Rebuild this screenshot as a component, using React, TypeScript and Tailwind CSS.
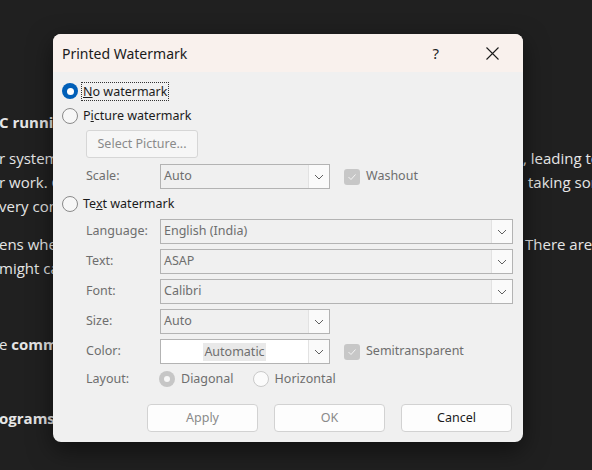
import React from 'react'

const UI = { fontFamily: '"Noto Sans", "Open Sans", sans-serif' }
const DOC = { fontFamily: '"Open Sans", "Noto Sans", sans-serif' }

function Chevron() {
  return (
    <svg width="10" height="6" viewBox="0 0 10 6" fill="none">
      <polyline points="1,1 5,5 9,1" stroke="#606060" strokeWidth="1" />
    </svg>
  )
}

function Radio({ state }: { state: 'on' | 'off' | 'dis-on' | 'dis-off' }) {
  if (state === 'on')
    return (
      <span className="w-[16px] h-[16px] rounded-full bg-[#005fb8] flex items-center justify-center shrink-0">
        <span className="w-[7px] h-[7px] rounded-full bg-white" />
      </span>
    )
  if (state === 'dis-on')
    return (
      <span className="w-[16px] h-[16px] rounded-full bg-[#c6c6c6] flex items-center justify-center shrink-0">
        <span className="w-[6px] h-[6px] rounded-full bg-[#f7f7f7]" />
      </span>
    )
  if (state === 'dis-off')
    return <span className="w-[16px] h-[16px] rounded-full border border-[#c9c9c9] bg-[#fbfbfb] shrink-0" />
  return <span className="w-[16px] h-[16px] rounded-full border border-[#8a8a8a] bg-[#f7f7f7] shrink-0" />
}

function Check() {
  return (
    <span className="w-[16px] h-[16px] rounded-[3px] bg-[#c7c7c7] flex items-center justify-center shrink-0">
      <svg width="10" height="8" viewBox="0 0 10 8" fill="none">
        <polyline points="1.5,4 4,6.5 8.5,1.5" stroke="#f4f4f4" strokeWidth="1" />
      </svg>
    </span>
  )
}

function Select({ value, wide, white, center }: { value: string; wide?: boolean; white?: boolean; center?: boolean }) {
  return (
    <div
      className={`${wide ? 'w-[353px]' : 'w-[170px]'} h-[25px] flex border border-[#b3b3b3] ${white ? 'bg-white' : 'bg-[#f0f0f0]'}`}
    >
      <div className={`flex-1 flex items-center px-[3px] text-[#6e6e6e] ${center ? 'justify-center' : ''}`}>
        <span className={center ? 'bg-[#e9e9e9] px-[1px] leading-[18px]' : ''}>{value}</span>
      </div>
      <div className="w-[21px] bg-[#fafafa] border-l border-[#e2e2e2] flex items-center justify-center">
        <Chevron />
      </div>
    </div>
  )
}

function FieldRow({ label, children }: { label: string; children: React.ReactNode }) {
  return (
    <div className="flex items-center h-[25px]">
      <span className="w-[74px] text-[#6e6e6e]">{label}</span>
      {children}
    </div>
  )
}

function Btn({ label, active }: { label: string; active?: boolean }) {
  return (
    <div
      className={`w-[111px] h-[28px] rounded-[4px] border border-[#d2d2d2] bg-[#fdfdfd] flex items-center justify-center ${active ? 'text-[#1b1b1b]' : 'text-[#8a8a8a]'}`}
    >
      {label}
    </div>
  )
}

// lines of the document that sits behind the dialog
const docLines: { top: number; left: React.ReactNode; right?: string; pad?: string }[] = [
  { top: 110, left: <b>C running slow</b> },
  { top: 12, left: 'r system resources are used up', right: ', leading to', pad: 'pl-[1px]' },
  { top: 0, left: 'r work. Closing programs', right: 'taking some', pad: 'pl-[6px]' },
  { top: 0, left: 'very computer' },
  { top: 14, left: 'ens when too many apps', right: 'There are', pad: 'pl-[3px]' },
  { top: 0, left: 'might cause' },
  { top: 52, left: <>e <b>commands</b></> },
  { top: 50, left: <b>ograms</b> },
]

export default function App() {
  return (
    <div className="relative w-[592px] h-[470px] bg-[#202020] overflow-hidden">
      <div className="flex flex-col text-[15px] text-[#e6e6e6]" style={DOC}>
        {docLines.map((l, i) => (
          <div key={i} className="grid grid-cols-[522px_70px] leading-[24px]" style={{ marginTop: l.top }}>
            <div className="whitespace-nowrap overflow-hidden ml-[-1px]">{l.left}</div>
            <div className={`whitespace-nowrap overflow-hidden ${l.pad ?? ''}`}>{l.right}</div>
          </div>
        ))}
      </div>

      {/* dialog */}
      <div
        className="absolute left-[53px] top-[34px] w-[470px] h-[408px] rounded-[8px] overflow-hidden bg-[#f0f0f0] shadow-[0_8px_24px_rgba(0,0,0,0.5)] flex flex-col text-[12.5px] text-[#1b1b1b]"
        style={UI}
      >
        <div className="h-[38px] shrink-0 bg-[#f9f1ed] flex items-center pl-[9px] pr-[24px]">
          <span className="text-[14px] text-[#1b1b1b] flex-1">Printed Watermark</span>
          <span className="text-[15px] mr-[47px] text-[#222]">?</span>
          <svg width="13" height="13" viewBox="0 0 13 13" fill="none">
            <path d="M0.5 0.5 L12.5 12.5 M12.5 0.5 L0.5 12.5" stroke="#1b1b1b" strokeWidth="1.1" />
          </svg>
        </div>

        <div className="flex flex-col pl-[9px] pt-[8px]">
          <div className="flex items-center h-[22px] gap-[3px]">
            <Radio state="on" />
            <span className="border border-dotted border-[#333] px-[1px] leading-[17px]">
              <u>N</u>o watermark
            </span>
          </div>
          <div className="flex items-center h-[22px] gap-[5px] mt-[3px]">
            <Radio state="off" />
            <span>
              P<u>i</u>cture watermark
            </span>
          </div>

          <div className="flex flex-col pl-[24px]">
            <div className="mt-[3px] w-[112px] h-[28px] rounded-[3px] border border-[#d6d6d6] bg-[#f6f6f6] flex items-center justify-center text-[#8a8a8a]">
              Select Picture...
            </div>
            <div className="mt-[6px] flex items-center">
              <FieldRow label="Scale:">
                <Select value="Auto" />
              </FieldRow>
              <div className="flex items-center gap-[6px] ml-[14px] text-[#6e6e6e]">
                <Check />
                <span>Washout</span>
              </div>
            </div>
          </div>

          <div className="flex items-center h-[22px] gap-[5px] mt-[4px]">
            <Radio state="off" />
            <span>
              Te<u>x</u>t watermark
            </span>
          </div>

          <div className="flex flex-col pl-[24px] gap-[5px] mt-[4px]">
            <FieldRow label="Language:">
              <Select value="English (India)" wide />
            </FieldRow>
            <FieldRow label="Text:">
              <Select value="ASAP" wide />
            </FieldRow>
            <FieldRow label="Font:">
              <Select value="Calibri" wide />
            </FieldRow>
            <FieldRow label="Size:">
              <Select value="Auto" />
            </FieldRow>
            <div className="flex items-center">
              <FieldRow label="Color:">
                <Select value="Automatic" white center />
              </FieldRow>
              <div className="flex items-center gap-[6px] ml-[14px] text-[#6e6e6e]">
                <Check />
                <span>Semitransparent</span>
              </div>
            </div>
            <div className="flex items-center h-[20px] text-[#6e6e6e]">
              <span className="w-[73px]">Layout:</span>
              <div className="flex items-center gap-[6px]">
                <Radio state="dis-on" />
                <span>Diagonal</span>
              </div>
              <div className="flex items-center gap-[6px] ml-[19px]">
                <Radio state="dis-off" />
                <span>Horizontal</span>
              </div>
            </div>
          </div>

          <div className="flex gap-[16px] ml-[85px] mt-[15px]">
            <Btn label="Apply" />
            <Btn label="OK" />
            <Btn label="Cancel" active />
          </div>
        </div>
      </div>
    </div>
  )
}
